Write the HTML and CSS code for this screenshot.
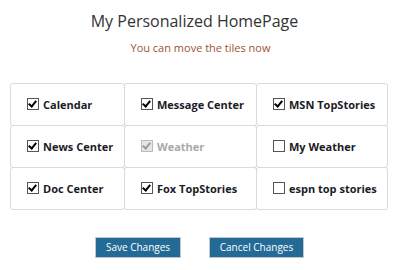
FILE: index.html
```html
<!DOCTYPE html>
<html>
<head>
<meta charset="utf-8">
<link rel="stylesheet" href="styles.css">
</head>
<body>
<div class="page">
  <h1 class="title">My Personalized HomePage</h1>
  <p class="subtitle">You can move the tiles now</p>
  <div class="tiles">
    <div class="tile"><span class="cb on"></span>Calendar</div>
    <div class="tile"><span class="cb on"></span>Message Center</div>
    <div class="tile"><span class="cb on"></span>MSN TopStories</div>
    <div class="tile"><span class="cb on"></span>News Center</div>
    <div class="tile disabled"><span class="cb on"></span>Weather</div>
    <div class="tile"><span class="cb"></span>My Weather</div>
    <div class="tile"><span class="cb on"></span>Doc Center</div>
    <div class="tile"><span class="cb on"></span>Fox TopStories</div>
    <div class="tile"><span class="cb"></span>espn top stories</div>
  </div>
  <div class="actions">
    <button class="btn btn-save">Save Changes</button>
    <button class="btn btn-cancel">Cancel Changes</button>
  </div>
</div>
</body>
</html>
```
FILE: styles.css
```css
html, body {
  margin: 0;
  padding: 0;
  background: #fff;
}
body {
  font-family: "Open Sans", "Liberation Sans", sans-serif;
  color: #222;
}
.page {
  width: 401px;
  padding-top: 10px;
}
.title {
  margin: 0;
  font-size: 16px;
  font-weight: 400;
  line-height: 22px;
  color: #333;
  text-align: center;
  padding-right: 12px;
}
.subtitle {
  margin: 8px 0 0;
  font-size: 11px;
  line-height: 16px;
  color: #9c5532;
  text-align: center;
}
.tiles {
  margin: 27px 0 0 10px;
  display: grid;
  grid-template-columns: 114px 132px 131px;
  grid-auto-rows: 42px;
}
.tile {
  box-sizing: border-box;
  border: 1px solid #dcd8df;
  border-radius: 3px;
  margin: 0 -1px -1px 0;
  display: flex;
  align-items: center;
  padding-left: 16px;
  font-size: 11px;
  font-weight: 700;
  color: #1b1b26;
}
.cb {
  box-sizing: border-box;
  width: 12px;
  height: 12px;
  border: 1px solid #555;
  background: #fff;
  margin-right: 4px;
  position: relative;
  flex: none;
  top: -1px;
}
.cb.on::after {
  content: "";
  position: absolute;
  left: 2px;
  top: 0px;
  width: 3px;
  height: 6px;
  border-right: 2px solid #000;
  border-bottom: 2px solid #000;
  transform: rotate(40deg);
}
.tile.disabled {
  color: #a9a9a9;
}
.tile.disabled .cb {
  border-color: #bbb;
  background: #e6e6e6;
}
.tile.disabled .cb.on::after {
  border-color: #999;
}
.actions {
  margin-top: 28px;
  display: flex;
  justify-content: center;
  gap: 28px;
  padding-right: 2px;
}
.btn {
  font-family: "Open Sans", "Liberation Sans", sans-serif;
  font-size: 10px;
  color: #fff;
  background: #236b96;
  border: 1px solid #c4c8cc;
  height: 21px;
  padding: 0;
  line-height: 19px;
  border-radius: 0;
}
.btn-save { width: 86px; }
.btn-cancel { width: 95px; }
```
